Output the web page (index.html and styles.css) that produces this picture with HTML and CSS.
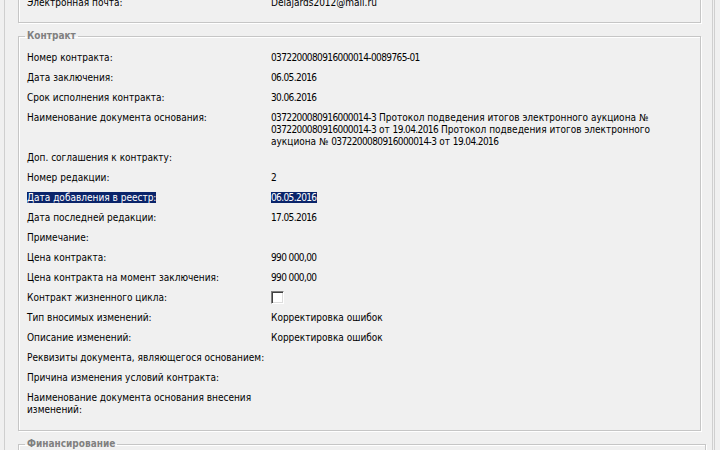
FILE: index.html
```html
<!DOCTYPE html>
<html>
<head>
<meta charset="utf-8">
<title>Контракт</title>
<link rel="stylesheet" href="styles.css">
</head>
<body>
<div class="page">
	<!-- поставщик: видна только последняя строка -->
	<fieldset class="fs fs-prev">
		<legend>Информация о поставщике</legend>
		<div class="row"><div class="lbl">Электронная почта:</div><div class="val">Delajards2012@mail.ru</div></div>
	</fieldset>

	<fieldset class="fs fs-main">
		<legend>Контракт</legend>
		<div class="row"><div class="lbl">Номер контракта:</div><div class="val num">0372200080916000014-0089765-01</div></div>
		<div class="row"><div class="lbl">Дата заключения:</div><div class="val num">06.05.2016</div></div>
		<div class="row"><div class="lbl">Срок исполнения контракта:</div><div class="val num">30.06.2016</div></div>
		<div class="row"><div class="lbl">Наименование документа основания:</div><div class="val"><span class="num">0372200080916000014-3</span> Протокол подведения итогов электронного аукциона № <span class="num">0372200080916000014-3</span> от <span class="num">19.04.2016</span> Протокол подведения итогов электронного аукциона № <span class="num">0372200080916000014-3</span> от <span class="num">19.04.2016</span></div></div>
		<div class="row"><div class="lbl">Доп. соглашения к контракту:</div><div class="val"></div></div>
		<div class="row"><div class="lbl">Номер редакции:</div><div class="val num">2</div></div>
		<div class="row"><div class="lbl"><span class="sel">Дата добавления в реестр:</span></div><div class="val num"><span class="sel">06.05.2016</span></div></div>
		<div class="row"><div class="lbl">Дата последней редакции:</div><div class="val num">17.05.2016</div></div>
		<div class="row"><div class="lbl">Примечание:</div><div class="val"></div></div>
		<div class="row"><div class="lbl">Цена контракта:</div><div class="val num">990 000,00</div></div>
		<div class="row"><div class="lbl">Цена контракта на момент заключения:</div><div class="val num">990 000,00</div></div>
		<div class="row"><div class="lbl">Контракт жизненного цикла:</div><div class="val"><span class="chk"></span></div></div>
		<div class="row"><div class="lbl">Тип вносимых изменений:</div><div class="val">Корректировка ошибок</div></div>
		<div class="row"><div class="lbl">Описание изменений:</div><div class="val">Корректировка ошибок</div></div>
		<div class="row"><div class="lbl">Реквизиты документа, являющегося основанием:</div><div class="val"></div></div>
		<div class="row"><div class="lbl">Причина изменения условий контракта:</div><div class="val"></div></div>
		<div class="row"><div class="lbl">Наименование документа основания внесения изменений:</div><div class="val"></div></div>
	</fieldset>

	<fieldset class="fs fs-wide">
		<legend>Финансирование</legend>
		<div class="row"><div class="lbl">Источник финансирования:</div><div class="val">Бюджетные средства</div></div>
		<div class="row"><div class="lbl">Уровень бюджета:</div><div class="val">Местный бюджет</div></div>
	</fieldset>
</div>
</body>
</html>
```

FILE: styles.css
```css
html, body {
	margin: 0;
	padding: 0;
	background: #f0f0f0;
	overflow: hidden;
}
body {
	font-family: "DejaVu Sans Condensed", "DejaVu Sans", sans-serif;
	font-size: 10px;
	line-height: 12px;
	color: #000;
}
.page {
	margin: -25px 5px 0 4px;
	padding: 0 11px 0 13px;
	border-left: 1px solid #cfcfcf;
	border-right: 3px double #cfcfcf;
}
.fs {
	margin: 7px 0 0;
	padding: 8px 8px 11px;
	border: 1px solid #c6c6c6;
	box-shadow: inset 1px 1px 0 #fff, 1px 1px 0 #fff;
}
.fs-prev {
	margin-top: 0;
	padding-bottom: 7px;
}
.fs-main {
	padding-bottom: 12px;
}
.fs-wide {
	margin-right: -5px;
}
.fs legend {
	margin-left: -2px;
	padding: 0 2px;
	font-weight: bold;
	line-height: 12px;
	color: #808080;
}
.row {
	display: grid;
	grid-template-columns: 244px 1fr;
	min-height: 20px;
}
.lbl, .val {
	padding: 2px 0;
}
/* цифры в Tahoma заметно уже */
.num {
	letter-spacing: -0.6px;
}
.sel {
	background: #0a246a;
	color: #fff;
}
.chk {
	display: block;
	width: 11px;
	height: 11px;
	margin-top: -1px;
	background: #fff;
	border: 1px solid;
	border-color: #808080 #fff #fff #808080;
	box-shadow: inset 1px 1px 0 #404040, inset -1px -1px 0 #dcdcdc;
}
```
